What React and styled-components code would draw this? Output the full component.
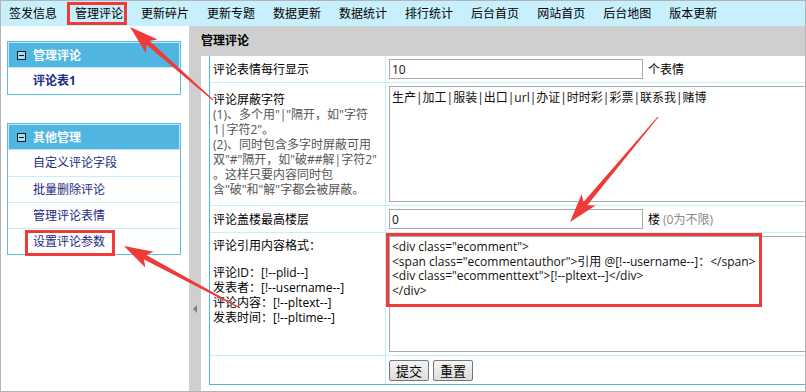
import React from "react";
import styled, { createGlobalStyle, css } from "styled-components";

const RED = "#ef3a3a";
const FONT = `"Open Sans", "Noto Sans CJK SC", sans-serif`;

const GlobalStyle = createGlobalStyle`
  html, body { margin: 0; padding: 0; background: #fff; }
  body { font-family: ${FONT}; font-size: 12px; color: #000; }
  *, *::before, *::after { box-sizing: border-box; }
`;

const Frame = styled.div`
  position: relative;
  width: 806px;
  height: 392px;
  border: 1px solid #b4b4b4;
  overflow: hidden;
  display: flex;
  flex-direction: column;
  background: #fff;
`;

const TopNav = styled.nav`
  flex: none;
  display: flex;
  height: 25px;
  padding-left: 8px;
  gap: 18px;
  background: #c8effc;
`;

const NavItem = styled.span`
  position: relative;
  line-height: 25px;
  white-space: nowrap;
  ${(p) =>
    p.$marked &&
    css`
      &::after {
        content: "";
        position: absolute;
        left: -8px;
        right: -4px;
        top: 1px;
        bottom: 1px;
        border: 3px solid ${RED};
      }
    `}
`;

const Body = styled.div`
  flex: 1;
  display: flex;
  min-height: 0;
`;

const Sidebar = styled.aside`
  flex: none;
  width: 188px;
  padding: 15px 0 0 6px;
  display: flex;
  flex-direction: column;
  gap: 28px;
  background: #fff;
`;

const MenuBox = styled.div`
  width: 174px;
  border: 1px solid #5dbce6;
  background: #fff;
`;

const MenuHead = styled.div`
  height: 26px;
  display: flex;
  align-items: center;
  gap: 7px;
  padding-left: 9px;
  background: #50b5e0;
  box-shadow: inset 0 0 0 1px #bfe8f8;
  color: #fff;
  font-weight: bold;
`;

const MenuItem = styled.div`
  position: relative;
  height: 26px;
  line-height: 25px;
  padding-left: 25px;
  color: #1c2a84;
  font-weight: ${(p) => (p.$bold ? "bold" : "normal")};
  & + & {
    border-top: 1px solid #c6eefb;
  }
  ${(p) =>
    p.$marked &&
    css`
      &::after {
        content: "";
        position: absolute;
        left: 17px;
        width: 90px;
        top: 1px;
        bottom: -2px;
        border: 3px solid ${RED};
      }
    `}
`;

const Main = styled.section`
  flex: 1;
  min-width: 0;
  display: flex;
  flex-direction: column;
`;

const MainHeader = styled.h2`
  flex: none;
  margin: 0;
  height: 30px;
  line-height: 30px;
  padding-left: 12px;
  background: #cfcfcf;
  font-size: 12px;
  font-weight: bold;
`;

const MainBody = styled.div`
  flex: 1;
  display: flex;
  min-height: 0;
`;

const Splitter = styled.div`
  flex: none;
  width: 12px;
  padding-top: 249px;
  display: flex;
  justify-content: center;
  align-items: flex-start;
  background: #cfcfcf;
`;

const SplitArrow = styled.span`
  width: 0;
  height: 0;
  border-top: 4px solid transparent;
  border-bottom: 4px solid transparent;
  border-right: 4px solid #8c7b66;
`;

const Content = styled.div`
  flex: 1;
  min-width: 0;
  padding-left: 8px;
  overflow: hidden;
  background: #fff;
`;

const FormGrid = styled.div`
  display: grid;
  grid-template-columns: 175px 640px;
  grid-template-rows: 26px 122px 26px 122px 28px;
  gap: 1px;
  width: max-content;
  background: #c8eefa;
  border-left: 1px solid #4fb4df;
  border-bottom: 1px solid #4fb4df;
`;

const LabelCell = styled.div`
  background: #fff;
  padding: ${(p) => (p.$top ? "5px 3px 0" : "0 3px")};
  display: flex;
  flex-direction: column;
  justify-content: ${(p) => (p.$top ? "flex-start" : "center")};
  line-height: 15px;
`;

const ValueCell = styled.div`
  background: #fff;
  padding: 3px;
  display: flex;
  align-items: ${(p) => (p.$top ? "flex-start" : "center")};
  gap: ${(p) => p.$gap || 5}px;
`;

const Hint = styled.span`
  color: #555;
`;

const Muted = styled.span`
  color: #888;
  margin-left: 3px;
`;

const Spacer = styled.span`
  display: block;
  height: 12px;
`;

const TextInput = styled.input`
  width: 254px;
  height: 20px;
  margin: 0;
  padding: 0 2px;
  border: 1px solid #a9a9a9;
  font: inherit;
  color: #111;
  background: #fff;
`;

const TextArea = styled.textarea`
  width: 420px;
  height: 116px;
  margin: 0;
  padding: ${(p) => (p.$code ? "3px 2px" : "4px 2px")};
  border: 1px solid #a9a9a9;
  font: inherit;
  line-height: 14.5px;
  color: #111;
  resize: none;
  overflow: hidden;
  background: #fff;
`;

const Button = styled.button`
  width: 40px;
  height: 21px;
  margin: 0;
  padding: 0;
  border: 1px solid #777;
  border-radius: 2px;
  background: linear-gradient(#f4f4f4, #dcdcdc);
  font: inherit;
  font-size: 13px;
  color: #000;
`;

const Overlay = styled.svg`
  position: absolute;
  left: -1px;
  top: -1px;
  width: 806px;
  height: 392px;
  pointer-events: none;
`;

function BoxIcon() {
  return (
    <svg width="9" height="9" viewBox="0 0 9 9">
      <rect x="0.5" y="0.5" width="8" height="8" fill="#a8dcf2" stroke="#1a1a1a" />
      <line x1="2" y1="4.5" x2="7" y2="4.5" stroke="#1a1a1a" />
    </svg>
  );
}

function arrowPoints(x1, y1, x2, y2, o = {}) {
  const { tailW = 1, neckW = 5, headW = 18, headL = 24, barb = 5 } = o;
  const dx = x2 - x1;
  const dy = y2 - y1;
  const L = Math.hypot(dx, dy);
  const ux = dx / L;
  const uy = dy / L;
  const nx = -uy;
  const ny = ux;
  const bx = x2 - ux * headL;
  const by = y2 - uy * headL;
  const wx = bx - ux * barb;
  const wy = by - uy * barb;
  const p = [
    [x1 + (nx * tailW) / 2, y1 + (ny * tailW) / 2],
    [bx + (nx * neckW) / 2, by + (ny * neckW) / 2],
    [wx + (nx * headW) / 2, wy + (ny * headW) / 2],
    [x2, y2],
    [wx - (nx * headW) / 2, wy - (ny * headW) / 2],
    [bx - (nx * neckW) / 2, by - (ny * neckW) / 2],
    [x1 - (nx * tailW) / 2, y1 - (ny * tailW) / 2],
  ];
  return p.map((q) => q.map((v) => v.toFixed(1)).join(",")).join(" ");
}

const navItems = [
  "签发信息",
  "管理评论",
  "更新碎片",
  "更新专题",
  "数据更新",
  "数据统计",
  "排行统计",
  "后台首页",
  "网站首页",
  "后台地图",
  "版本更新",
];

const codeText = `<div class="ecomment">
<span class="ecommentauthor">引用 @[!--username--]：</span>
<div class="ecommenttext">[!--pltext--]</div>
</div>`;

export default function App() {
  return (
    <>
      <GlobalStyle />
      <Frame>
        <TopNav>
          {navItems.map((t) => (
            <NavItem key={t} $marked={t === "管理评论"}>
              {t}
            </NavItem>
          ))}
        </TopNav>
        <Body>
          <Sidebar>
            <MenuBox>
              <MenuHead>
                <BoxIcon />
                管理评论
              </MenuHead>
              <MenuItem $bold>评论表1</MenuItem>
            </MenuBox>
            <MenuBox>
              <MenuHead>
                <BoxIcon />
                其他管理
              </MenuHead>
              <MenuItem>自定义评论字段</MenuItem>
              <MenuItem>批量删除评论</MenuItem>
              <MenuItem>管理评论表情</MenuItem>
              <MenuItem $marked>设置评论参数</MenuItem>
            </MenuBox>
          </Sidebar>
          <Main>
            <MainHeader>管理评论</MainHeader>
            <MainBody>
              <Splitter>
                <SplitArrow />
              </Splitter>
              <Content>
                <FormGrid>
                  <LabelCell>评论表情每行显示</LabelCell>
                  <ValueCell>
                    <TextInput defaultValue="10" />
                    <span>个表情</span>
                  </ValueCell>

                  <LabelCell>
                    <span>评论屏蔽字符</span>
                    <Hint>
                      (1)、多个用"|"隔开，如"字符
                      <br />
                      1|字符2"。
                      <br />
                      (2)、同时包含多字时屏蔽可用
                      <br />
                      双"#"隔开，如"破##解|字符2"
                      <br />
                      。这样只要内容同时包
                      <br />
                      含"破"和"解"字都会被屏蔽。
                    </Hint>
                  </LabelCell>
                  <ValueCell $top>
                    <TextArea defaultValue="生产|加工|服装|出口|url|办证|时时彩|彩票|联系我|赌博" />
                  </ValueCell>

                  <LabelCell>评论盖楼最高楼层</LabelCell>
                  <ValueCell>
                    <TextInput defaultValue="0" />
                    <span>
                      楼<Muted>(0为不限)</Muted>
                    </span>
                  </ValueCell>

                  <LabelCell $top>
                    <span>评论引用内容格式：</span>
                    <Spacer />
                    <span>评论ID：[!--plid--]</span>
                    <span>发表者：[!--username--]</span>
                    <span>评论内容：[!--pltext--]</span>
                    <span>发表时间：[!--pltime--]</span>
                  </LabelCell>
                  <ValueCell $top>
                    <TextArea $code defaultValue={codeText} />
                  </ValueCell>

                  <LabelCell />
                  <ValueCell $gap={4}>
                    <Button type="button">提交</Button>
                    <Button type="button">重置</Button>
                  </ValueCell>
                </FormGrid>
              </Content>
            </MainBody>
          </Main>
        </Body>
        <Overlay viewBox="0 0 806 392">
          <rect x="387.5" y="234.5" width="373" height="71" fill="none" stroke={RED} strokeWidth="3" />
          <polygon points={arrowPoints(213, 100, 130, 27)} fill={RED} />
          <polygon points={arrowPoints(240, 308, 124, 246)} fill={RED} />
          <polygon points={arrowPoints(658, 117, 570, 222)} fill={RED} />
        </Overlay>
      </Frame>
    </>
  );
}
